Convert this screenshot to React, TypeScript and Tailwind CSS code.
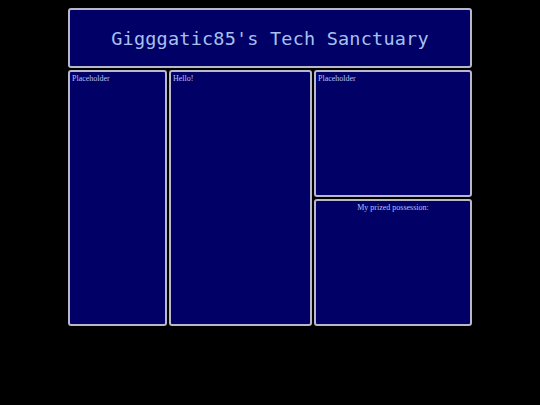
export default function App() {
  const panel =
    "border-2 border-[#b8b8c8] rounded-[3px] bg-[#000066] text-[#b0c0ff] text-[8px] leading-[10px] px-[2px] py-[2px]";
  return (
    <div className="min-h-[405px] w-full bg-black pt-[8px]" style={{ fontFamily: '"Liberation Serif", serif' }}>
      <div className="mx-auto w-[404px] flex flex-col gap-[2px]">
        <div className="h-[60px] border-2 border-[#b8b8c8] rounded-[3px] bg-[#000066] flex items-center justify-center pt-[2px]">
          <h1
            className="text-[18.5px] text-[#a8c0f0] tracking-[0.2px]"
            style={{ fontFamily: '"DejaVu Sans Mono", monospace' }}
          >
            Gigggatic85's Tech Sanctuary
          </h1>
        </div>
        <div className="h-[256px] flex gap-[2px]">
          <div className={`${panel} w-[99px]`}>Placeholder</div>
          <div className={`${panel} w-[143px]`}>Hello!</div>
          <div className="flex-1 flex flex-col gap-[2px]">
            <div className={`${panel} h-[127px]`}>Placeholder</div>
            <div className={`${panel} flex-1 text-center`}>My prized possession:</div>
          </div>
        </div>
      </div>
    </div>
  );
}
